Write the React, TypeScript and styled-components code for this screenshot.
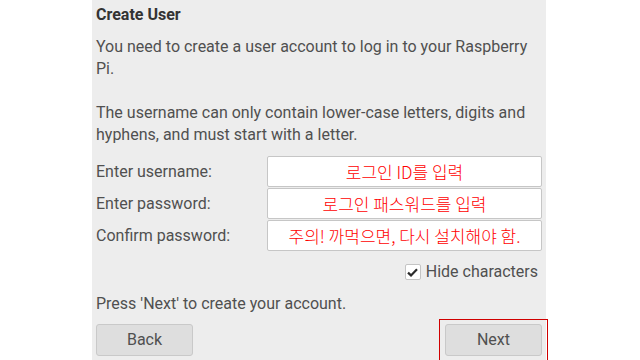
import React from 'react'
import styled, { createGlobalStyle } from 'styled-components'

const GlobalStyle = createGlobalStyle`
    html, body {
        margin: 0;
        padding: 0;
        background: #ffffff;
    }
    body {
        font-family: Roboto, "Liberation Sans", sans-serif;
    }
`

const Page = styled.div`
    width: 640px;
    height: 360px;
    overflow: hidden;
    display: flex;
`

const Panel = styled.div`
    margin-left: 92px;
    width: 454px;
    height: 360px;
    box-sizing: border-box;
    padding: 4px 4px 0 4px;
    background: #ededed;
    color: #505050;
    font-size: 16px;
    line-height: 22px;
    display: flex;
    flex-direction: column;
`

const Title = styled.div`
    font-weight: 700;
    color: #333333;
`

const Paragraph = styled.p<{ $gap: number }>`
    margin: 0;
    margin-top: ${({ $gap }) => $gap}px;
`

const Form = styled.div`
    margin-top: 10px;
    display: flex;
    flex-direction: column;
    gap: 1px;
`

const Row = styled.div`
    display: flex;
    align-items: center;
    justify-content: space-between;
    height: 31px;
`

const Label = styled.span``

const Field = styled.div`
    width: 275px;
    height: 31px;
    box-sizing: border-box;
    background: #ffffff;
    border: 1px solid #c6c6c6;
    border-radius: 2px;
    display: flex;
    align-items: center;
    justify-content: center;
    color: #ff0000;
    font-family: "Noto Sans CJK KR", sans-serif;
    font-weight: 300;
    font-size: 17px;
    line-height: 20px;
    white-space: nowrap;
`

const CheckRow = styled.label`
    margin-top: 10px;
    align-self: flex-end;
    display: flex;
    align-items: center;
    gap: 5px;
    margin-right: 4px;
`

const Box = styled.span`
    width: 16px;
    height: 16px;
    box-sizing: border-box;
    background: #ffffff;
    border: 1px solid #c4c4c4;
    border-radius: 2px;
    display: flex;
    align-items: center;
    justify-content: center;
`

const Footer = styled.p`
    margin: 10px 0 0 0;
`

const Buttons = styled.div`
    margin-top: 9px;
    display: flex;
    justify-content: space-between;
    align-items: flex-start;
`

const Button = styled.div`
    width: 97px;
    height: 32px;
    box-sizing: border-box;
    background: #dedede;
    border: 1px solid #c9c9c9;
    border-radius: 3px;
    display: flex;
    align-items: center;
    justify-content: center;
    color: #505050;
`

const Highlight = styled.div`
    margin: -5px -6px 0 0;
    padding: 4px 5px 10px 5px;
    border: 1px solid #d00000;
    border-bottom: none;
`

export default function App() {
    return (
        <Page>
            <GlobalStyle />
            <Panel>
                <Title>Create User</Title>
                <Paragraph $gap={10}>
                    You need to create a user account to log in to your Raspberry
                    <br />
                    Pi.
                </Paragraph>
                <Paragraph $gap={22}>
                    The username can only contain lower-case letters, digits and
                    <br />
                    hyphens, and must start with a letter.
                </Paragraph>
                <Form>
                    <Row>
                        <Label>Enter username:</Label>
                        <Field>로그인 ID를 입력</Field>
                    </Row>
                    <Row>
                        <Label>Enter password:</Label>
                        <Field>로그인 패스워드를 입력</Field>
                    </Row>
                    <Row>
                        <Label>Confirm password:</Label>
                        <Field>주의! 까먹으면, 다시 설치해야 함.</Field>
                    </Row>
                </Form>
                <CheckRow>
                    <Box>
                        <svg width="11" height="9" viewBox="0 0 11 9">
                            <path d="M1 4.6 L4 7.4 L10 1.2" fill="none" stroke="#2b2b2b" strokeWidth="2.2" />
                        </svg>
                    </Box>
                    Hide characters
                </CheckRow>
                <Footer>Press 'Next' to create your account.</Footer>
                <Buttons>
                    <Button>Back</Button>
                    <Highlight>
                        <Button>Next</Button>
                    </Highlight>
                </Buttons>
            </Panel>
        </Page>
    )
}
